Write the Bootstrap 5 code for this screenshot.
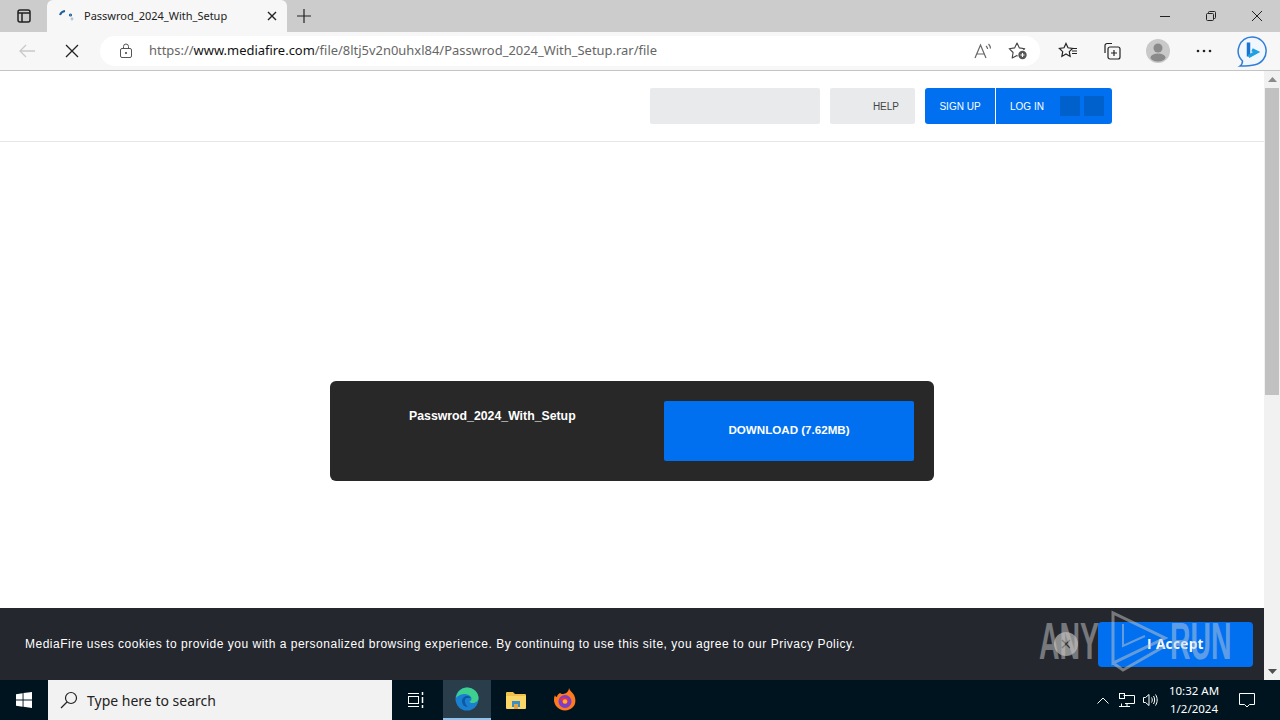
<!DOCTYPE html>
<html lang="en">
<head>
<meta charset="UTF-8">
<title>Passwrod_2024_With_Setup</title>
<link href="https://cdn.jsdelivr.net/npm/bootstrap@5.3.0/dist/css/bootstrap.min.css" rel="stylesheet">
<style>
  html, body { height: 720px; overflow: hidden; }
  body { font-family: "Open Sans", "Noto Sans", sans-serif; background: #fff; }
  .shell { width: 1280px; height: 720px; position: relative; }

  /* browser chrome */
  .tabstrip { height: 32px; background: #cccccc; }
  .panel-btn { width: 47px; }
  .tab-item { width: 240px; height: 32px; background: #f7f7f7; border-radius: 6px 6px 0 0; padding: 0 9px 0 12px; color: #222; }
  .tab-title { margin-left: 9px; font-family: "Noto Sans", sans-serif; font-size: 11px; }
  .new-tab { width: 34px; }
  .win-btn { width: 46px; }
  .toolbar { height: 39px; background: #f7f7f7; border-bottom: 1px solid #c4c4c4; }
  .back-slot { width: 46px; margin-left: 4px; }
  .nav-slot { width: 44px; }
  .addr { width: 940px; height: 30px; margin-left: 6px; background: #fff; border-radius: 15px; padding: 0 12px 0 19px; }
  .addr-text { margin-left: 16px; font-family: "Noto Sans", sans-serif; font-size: 12.95px; color: #666; white-space: nowrap; }
  .addr-text b { font-weight: 400; color: #111; }
  .slot-fav { width: 44px; margin-left: 6px; }
  .slot-coll { width: 43px; }
  .slot-user { width: 50px; }
  .slot-more { width: 42px; }
  .slot-bing { width: 54px; }
  .avatar { width: 24px; height: 24px; }

  /* page */
  .viewport { height: 609px; }
  .pagearea { width: 1264px; }
  .scrollbar-col { width: 16px; background: #f1f1f1; }
  .scroll-up, .scroll-down { height: 17px; }
  .scroll-thumb { width: 14px; height: 307px; background: #c1c1c1; margin-left: 1px; }
  .mf-head { height: 71px; border-bottom: 1px solid #e6e6e6; padding: 17px 0 0 650px; gap: 10px; background: #fff; }
  .mf-search { width: 170px; height: 36px; background: #e9eaeb; border-radius: 2px; }
  .mf-help { width: 85px; height: 36px; background: #e9eaeb; border-radius: 2px; padding-right: 16px; font: 10px "Liberation Sans", sans-serif; color: #444; }
  .mf-auth { height: 36px; background: #0070f0; border-radius: 3px; font: 10px "Liberation Sans", sans-serif; color: #fff; }
  .mf-sign { width: 70px; border-right: 1px solid #fff; height: 36px; box-sizing: content-box; }
  .mf-login { width: 116px; padding-left: 14px; }
  .mf-sq { width: 20px; height: 20px; background: #0060cc; margin-right: 4px; }
  .mf-login span { width: 50px; }
  .mf-body { flex: 1 1 auto; padding: 239px 0 0 330px; background: #fff; }
  .dl-box { width: 604px; height: 100px; background: #282828; border-radius: 6px; padding: 20px; }
  .dl-name { width: 314px; padding: 8px 0 0 59px; font: bold 12.3px "Liberation Sans", sans-serif; color: #fff; }
  .dl-btn { width: 250px; height: 60px; padding: 0 0 3px; background: #0070f0; border: 0; border-radius: 2px; font: bold 11.6px "Liberation Sans", sans-serif; color: #fff; }
  .cookie-bar { height: 72px; background: #24272e; padding: 0 11px 0 25px; }
  .cookie-text { font: 12px "Liberation Sans", sans-serif; letter-spacing: .51px; color: #fff; }
  .cookie-close { width: 24px; height: 24px; margin-right: 20px; border-radius: 50%; background: #8f8f8f; }
  .accept-btn { width: 155px; height: 45px; background: #0070f0; border: 0; border-radius: 4px; font: bold 13.5px "Open Sans", sans-serif; letter-spacing: .4px; color: #fff; }

  /* sandbox watermark, lies over the page */
  .watermark { position: absolute; left: 1039px; top: 610px; width: 195px; height: 62px; opacity: .5; color: #c8c8c8; pointer-events: none; }
  .wm-word { font: bold 52px/62px "Liberation Sans", sans-serif; transform: scaleX(.547); transform-origin: left center; position: absolute; top: 0; }
  .wm-any { left: 0; }
  .wm-run { left: 131px; color: #b9cbe0; }
  .watermark svg { position: absolute; left: 71px; top: 0; }

  /* taskbar */
  .taskbar { height: 40px; background: #00141f; color: #fff; }
  .start-btn { width: 48px; }
  .task-search { width: 344px; height: 40px; background: #f2f2f2; padding-left: 12px; color: #222; font: 14px "Noto Sans", sans-serif; }
  .task-search span { margin-left: 9px; }
  .task-slot { width: 49px; height: 40px; }
  .task-slot.slot-on { width: 48px; background: #2a3d4a; border-bottom: 2px solid #8cc4ee; }
  .task-view { width: 51px; padding-right: 3px; }
  .tray-clock { width: 60px; font: 11.5px/18px "Noto Sans", sans-serif; text-align: center; margin: 0 0 0 1px; }
  .tray-slot { width: 24px; }
  .tray-note { width: 45px; }
  .tray-edge { width: 11px; }
</style>
</head>
<body>
<div class="shell d-flex flex-column">

  <!-- tab strip -->
  <div class="tabstrip d-flex align-items-center">
    <div class="panel-btn d-flex justify-content-center">
      <svg width="16" height="16" viewBox="0 0 16 16" fill="none" stroke="#222" stroke-width="1.5"><rect x="2" y="2" width="12" height="12" rx="2"/><path d="M2 5h12M6 5v9"/></svg>
    </div>
    <div class="tab-item d-flex align-items-center">
      <svg width="16" height="16" viewBox="0 0 16 16" fill="none" stroke="#1d5f9c" stroke-width="2"><path d="M1 7a6 6 0 0 1 5-4"/><circle cx="11.500" cy="7" r=".6"/><circle cx="13" cy="11" r=".4" stroke="#9fb8cf"/></svg>
      <span class="tab-title flex-grow-1">Passwrod_2024_With_Setup</span>
      <svg width="12" height="12" viewBox="0 0 12 12" stroke="#222" stroke-width="1.4"><path d="M2 2l8 8M10 2l-8 8"/></svg>
    </div>
    <div class="new-tab d-flex justify-content-center">
      <svg width="16" height="16" viewBox="0 0 16 16" stroke="#222" stroke-width="1.2"><path d="M8 1v14M1 8h14"/></svg>
    </div>
    <div class="flex-grow-1"></div>
    <div class="win-btn d-flex justify-content-center"><svg width="12" height="12" viewBox="0 0 12 12" stroke="#222"><path d="M1 6.500h10"/></svg></div>
    <div class="win-btn d-flex justify-content-center"><svg width="12" height="12" viewBox="0 0 12 12" fill="none" stroke="#222"><rect x="1.500" y="3.500" width="7" height="7" rx="1"/><path d="M3.500 3.500v-1a1 1 0 0 1 1-1h5a1 1 0 0 1 1 1v5a1 1 0 0 1-1 1h-1"/></svg></div>
    <div class="win-btn d-flex justify-content-center"><svg width="12" height="12" viewBox="0 0 12 12" stroke="#222"><path d="M1 1l10 10M11 1L1 11"/></svg></div>
  </div>

  <!-- address bar -->
  <div class="toolbar d-flex align-items-center">
    <div class="back-slot d-flex justify-content-center">
      <svg width="18" height="16" viewBox="0 0 18 16" fill="none" stroke="#c9c9c9" stroke-width="1.3"><path d="M17 8H2M8 2L2 8l6 6"/></svg>
    </div>
    <div class="nav-slot d-flex justify-content-center">
      <svg width="14" height="14" viewBox="0 0 14 14" stroke="#222" stroke-width="1.3"><path d="M1 1l12 12M13 1L1 13"/></svg>
    </div>
    <div class="addr d-flex align-items-center">
      <svg width="14" height="16" viewBox="0 0 14 16" fill="none" stroke="#555"><rect x="1.500" y="5.500" width="11" height="9" rx="1.500"/><path d="M4.500 5.500V3.500a2.500 2.500 0 0 1 5 0v2"/><circle cx="7" cy="10" r=".7" fill="#555"/></svg>
      <span class="addr-text flex-grow-1">https://<b>www.mediafire.com</b>/file/8ltj5v2n0uhxl84/Passwrod_2024_With_Setup.rar/file</span>
      <svg class="me-3" width="18" height="16" viewBox="0 0 18 16" fill="none" stroke="#666" stroke-width="1.200"><path d="M1 15L6.500 2 12 15M3 11h7"/><path d="M12 3c1 .8 1.500 1.800 1.600 3M14.500 1c1.200 1.200 1.900 2.800 2 4.500"/></svg>
      <svg width="20" height="18" viewBox="0 0 20 18" fill="none" stroke="#444" stroke-width="1.100"><path d="M9 1l2.400 4.900 5.400.8-3.900 3.800.9 5.400L9 13.400l-4.800 2.500.9-5.400L1.200 6.700l5.400-.8z" stroke-linejoin="round"/><circle cx="14.500" cy="13" r="5" fill="#fff" stroke="none"/><circle cx="14.500" cy="13" r="4.200" fill="#555" stroke="none"/><path d="M14.500 11v4M12.500 13h4" stroke="#fff"/></svg>
    </div>
    <div class="slot-fav d-flex justify-content-center">
      <svg width="20" height="18" viewBox="0 0 20 18" fill="none" stroke="#222" stroke-width="1.200"><path d="M8 1.500l2 4.300 4.600.6-3.300 3.200.8 4.800L8 12l-4.100 2.400.8-4.800L1.400 6.400 6 5.800z"/><path d="M14 9h5M14 11.500h5M15 6.500h4"/></svg>
    </div>
    <div class="slot-coll d-flex justify-content-center">
      <svg width="18" height="18" viewBox="0 0 18 18" fill="none" stroke="#222" stroke-width="1.200"><path d="M2 11V3.500A2 2 0 0 1 4 1.500h5"/><rect x="5" y="5" width="12" height="12" rx="2"/><path d="M11 8v6M8 11h6"/></svg>
    </div>
    <div class="slot-user d-flex justify-content-center">
      <svg class="avatar" viewBox="0 0 24 24"><circle cx="12" cy="12" r="12" fill="#c9c9c9"/><circle cx="12" cy="9" r="4.500" fill="#8a8a8a"/><ellipse cx="12" cy="18.500" rx="7.500" ry="4" fill="#8a8a8a"/></svg>
    </div>
    <div class="slot-more d-flex justify-content-center">
      <svg width="16" height="4" viewBox="0 0 16 4" fill="#222"><circle cx="2" cy="2" r="1.300"/><circle cx="8" cy="2" r="1.300"/><circle cx="14" cy="2" r="1.300"/></svg>
    </div>
    <div class="slot-bing d-flex justify-content-center">
      <svg width="32" height="32" viewBox="0 0 32 32" fill="none"><path d="M16 2a14 14 0 0 1 3 27.700C14 31 8 31 4 31c1.500-1 2.500-3 2.500-5A14 14 0 0 1 16 2z" fill="#f2f7fd" stroke="#2f7fd8" stroke-width="1.500"/><path d="M12.500 7.500v14" stroke="#1a74d4" stroke-width="3.500"/><path d="M12.500 21.500l8-4.500-4.500-2.200" stroke="#1fa0e0" stroke-width="3.500"/></svg>
    </div>
  </div>

  <!-- page + scrollbar -->
  <div class="viewport d-flex">
    <div class="pagearea d-flex flex-column">
      <div class="mf-head d-flex align-items-start">
        <div class="mf-search"></div>
        <div class="mf-help d-flex align-items-center justify-content-end">HELP</div>
        <div class="mf-auth d-flex align-items-center">
          <div class="mf-sign d-flex align-items-center justify-content-center">SIGN UP</div>
          <div class="mf-login d-flex align-items-center"><span>LOG IN</span><div class="mf-sq"></div><div class="mf-sq"></div></div>
        </div>
      </div>
      <div class="mf-body">
        <div class="dl-box d-flex">
          <div class="dl-name">Passwrod_2024_With_Setup</div>
          <button class="dl-btn" type="button">DOWNLOAD (7.62MB)</button>
        </div>
      </div>
      <div class="cookie-bar d-flex align-items-center">
        <div class="cookie-text flex-grow-1">MediaFire uses cookies to provide you with a personalized browsing experience. By continuing to use this site, you agree to our Privacy Policy.</div>
        <div class="cookie-close d-flex align-items-center justify-content-center">
          <svg width="10" height="10" viewBox="0 0 10 10" stroke="#333" stroke-width="1.300"><path d="M1 1l8 8M9 1L1 9"/></svg>
        </div>
        <button class="accept-btn" type="button">I Accept</button>
      </div>
    </div>
    <div class="scrollbar-col d-flex flex-column">
      <div class="scroll-up d-flex align-items-center justify-content-center"><svg width="9" height="5" viewBox="0 0 9 5" fill="#8a8a8a"><path d="M4.500 0L9 5H0z"/></svg></div>
      <div class="scroll-thumb"></div>
      <div class="flex-grow-1"></div>
      <div class="scroll-down d-flex align-items-center justify-content-center"><svg width="9" height="5" viewBox="0 0 9 5" fill="#505050"><path d="M0 0h9L4.500 5z"/></svg></div>
    </div>
  </div>

  <!-- taskbar -->
  <div class="taskbar d-flex align-items-center">
    <div class="start-btn d-flex justify-content-center">
      <svg width="16" height="16" viewBox="0 0 16 16" fill="#fff"><path d="M0 2.200L6.600 1.200v6.400H0zM7.500 1.100L16 0v7.600H7.500zM0 8.500h6.600v6.300L0 13.800zM7.500 8.500H16V16l-8.500-1.200z"/></svg>
    </div>
    <div class="task-search d-flex align-items-center">
      <svg width="18" height="18" viewBox="0 0 18 18" fill="none" stroke="#222" stroke-width="1.200"><circle cx="11" cy="7" r="5.500"/><path d="M7 11l-6 6"/></svg>
      <span>Type here to search</span>
    </div>
    <div class="task-slot task-view d-flex align-items-center justify-content-center">
      <svg width="16" height="16" viewBox="0 0 16 16" fill="none" stroke="#fff"><path d="M0 1.500h11M0 14.500h11"/><rect x=".5" y="4.500" width="10" height="7"/><path d="M14.500 0v3M14.500 5v6M14.500 13v3" stroke-width="1.500"/></svg>
    </div>
    <div class="task-slot slot-on d-flex align-items-center justify-content-center">
      <svg width="24" height="24" viewBox="0 0 24 24"><circle cx="12" cy="12" r="11.500" fill="#1b7fd0"/><path d="M1 11C2 4 7 .5 12 .5c6 0 11.500 4.500 11.500 10.500 0 3.500-3 5-6 5-2 0-3-.7-3-1.500 2-1 2.500-2.500 1.500-4.500C14 7 9 6 5 8c-2 1-3.300 2-4 3z" fill="#3ecf8e"/><path d="M7 14c0-3 2.500-5 5.500-5 2 0 3 1 3 2H12c-3 0-3 6 1 9-4 0-6-3-6-6z" fill="#0c59a4"/></svg>
    </div>
    <div class="task-slot d-flex align-items-center justify-content-center">
      <svg width="22" height="20" viewBox="0 0 22 20"><path d="M1 3a1 1 0 0 1 1-1h6l2 2h10a1 1 0 0 1 1 1v2H1z" fill="#f0c14b"/><path d="M1 6h20v12a1 1 0 0 1-1 1H2a1 1 0 0 1-1-1z" fill="#fbd768"/><rect x="7" y="11" width="8" height="6" fill="#3a8fc9"/><rect x="9" y="14" width="4" height="5" fill="#e8a33d"/></svg>
    </div>
    <div class="task-slot d-flex align-items-center justify-content-center">
      <svg width="24" height="24" viewBox="0 0 24 24"><path d="M16 0c1 3 3 4 5 7 2 4 2 9-1 12a11 11 0 0 1-16 0C1 16 0 11 2 7c0 1 1 2 2 2 0-2 2-4 4-4-1 1 0 1 2 1 3 0 6-3 6-6z" fill="#ff7a1f"/><circle cx="12" cy="13.500" r="6.500" fill="#7b3fc9"/><path d="M7 11c2-2 6-2 8 0 1 2 0 5-3 5-2 0-3-1-3-3" fill="#e5314f"/><circle cx="12" cy="13.500" r="2.300" fill="#ffb02e"/></svg>
    </div>
    <div class="flex-grow-1"></div>
    <div class="tray-slot d-flex justify-content-center">
      <svg width="12" height="7" viewBox="0 0 12 7" fill="none" stroke="#fff"><path d="M.5 6.500l5.500-5.500 5.500 5.500"/></svg>
    </div>
    <div class="tray-slot d-flex justify-content-center">
      <svg width="16" height="16" viewBox="0 0 16 16" fill="none" stroke="#fff"><path d="M4.500 3.500h11v8H6M2.500 11.500v3M0 14.500h11M8 11.500v3"/><rect x=".5" y="1.500" width="5" height="5"/></svg>
    </div>
    <div class="tray-slot d-flex justify-content-center">
      <svg width="16" height="16" viewBox="0 0 16 16" fill="none" stroke="#fff"><path d="M.5 5.500h2L6 2.500v11l-3.500-3h-2z"/><path d="M8.500 5.500c1 1.500 1 3.500 0 5M10.500 4c1.500 2.500 1.500 5.500 0 8M12.500 2.500c2.200 3.200 2.200 7.800 0 11"/></svg>
    </div>
    <div class="tray-clock">10:32 AM<br>1/2/2024</div>
    <div class="tray-note d-flex justify-content-center">
      <svg width="16" height="16" viewBox="0 0 16 16" fill="none" stroke="#fff"><path d="M.5 1.500h15v11h-5L8 15l-2.500-2.500h-5z"/></svg>
    </div>
    <div class="tray-edge"></div>
  </div>

  <!-- watermark over the cookie bar -->
  <div class="watermark">
    <span class="wm-word wm-any">ANY</span>
    <svg width="58" height="62" viewBox="0 0 58 62" fill="none" stroke="#c8c8c8" stroke-width="3"><path d="M3 3v50l52-25z"/><path d="M3 53l10 7 42-24"/><path d="M13 14v22l22-10" stroke-width="2"/></svg>
    <span class="wm-word wm-run">RUN</span>
  </div>
</div>
</body>
</html>
